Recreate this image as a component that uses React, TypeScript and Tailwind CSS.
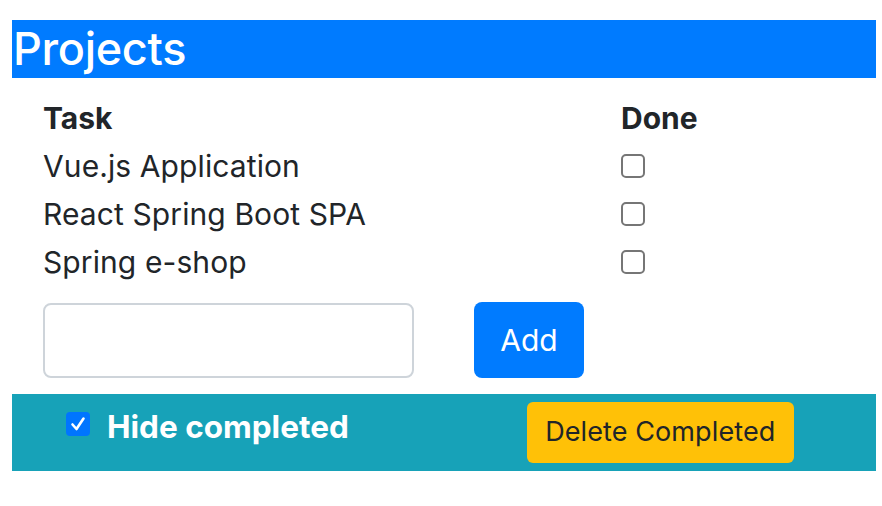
import React from "react";

const tasks = ["Vue.js Application", "React Spring Boot SPA", "Spring e-shop"];

function Box({ checked }: { checked?: boolean }) {
  if (checked) {
    return (
      <div className="w-[24px] h-[24px] rounded-[4px] bg-[#0075ff] flex items-center justify-center">
        <svg width="18" height="18" viewBox="0 0 18 18">
          <path d="M3.5 9.5 L7.5 14 L14.5 3.5" fill="none" stroke="white" strokeWidth="2.6" strokeLinecap="round" strokeLinejoin="round" />
        </svg>
      </div>
    );
  }
  return <div className="w-[24px] h-[24px] rounded-[5px] border-[2px] border-[#767676] bg-white" />;
}

export default function App() {
  return (
    <div className="w-[882px] h-[506px] bg-white pt-[20px] pl-[12px]" style={{ fontFamily: "Inter, 'Noto Sans', sans-serif" }}>
      <div className="w-[864px] h-[58px] bg-[#007bff] text-white text-[45px] leading-[58px] pl-[1px] font-medium tracking-[-0.3px]">
        Projects
      </div>
      <div className="mt-[16px] pl-[31px] text-[#212529]">
        <div className="flex h-[48px] items-center text-[30px] font-bold">
          <div className="w-[578px]">Task</div>
          <div>Done</div>
        </div>
        {tasks.map((t) => (
          <div key={t} className="flex h-[48px] items-center text-[30px] tracking-[0.1px]">
            <div className="w-[578px]">{t}</div>
            <Box />
          </div>
        ))}
        <div className="flex mt-[17px] items-start">
          <div className="w-[371px] h-[75px] rounded-[8px] border-[2px] border-[#ced4da] bg-white" />
          <button className="ml-[60px] w-[110px] h-[76px] -mt-[1px] rounded-[8px] bg-[#007bff] text-white text-[30px]">
            Add
          </button>
        </div>
      </div>
      <div className="w-[864px] h-[77px] mt-[16px] bg-[#17a2b8] flex items-start">
        <div className="ml-[54px] mt-[18px]">
          <Box checked />
        </div>
        <div className="ml-[17px] mt-[13px] text-white text-[31.5px] font-bold leading-[40px]">Hide completed</div>
        <button className="ml-[178px] mt-[8px] w-[267px] h-[61px] rounded-[6px] bg-[#ffc107] text-[#212529] text-[27px] tracking-[0.1px]">
          Delete Completed
        </button>
      </div>
    </div>
  );
}
